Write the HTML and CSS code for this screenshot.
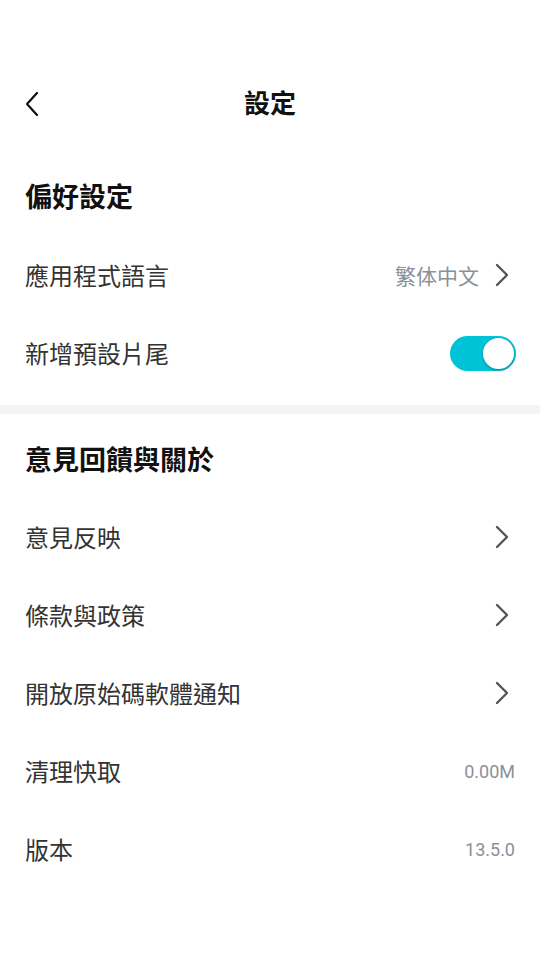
FILE: index.html
```html
<!DOCTYPE html>
<html lang="zh-Hant">
<head>
    <meta charset="UTF-8">
    <meta name="viewport" content="width=device-width, initial-scale=1.0">
    <title>設定</title>
    <link rel="stylesheet" href="styles.css">
</head>
<body>
    <div class="page">
        <div class="topbar">
            <div class="back">
                <svg width="16" height="26" viewBox="0 0 16 26">
                    <path d="M13 2 L3 13 L13 24" fill="none" stroke="#111" stroke-width="2.2" stroke-linecap="round" stroke-linejoin="round"/>
                </svg>
            </div>
            <div class="title">設定</div>
        </div>

        <div class="section-title first">偏好設定</div>
        <div class="row">
            <span class="label">應用程式語言</span>
            <span class="right">
                <span class="value cjk">繁体中文</span>
                <svg class="chev" width="14" height="24" viewBox="0 0 14 24">
                    <path d="M2 2 L12 12 L2 22" fill="none" stroke="#555" stroke-width="2.4" stroke-linecap="round" stroke-linejoin="round"/>
                </svg>
            </span>
        </div>
        <div class="row">
            <span class="label">新增預設片尾</span>
            <span class="toggle on"><span class="knob"></span></span>
        </div>

        <div class="divider"></div>

        <div class="section-title">意見回饋與關於</div>
        <div class="row">
            <span class="label">意見反映</span>
            <svg class="chev" width="14" height="24" viewBox="0 0 14 24">
                <path d="M2 2 L12 12 L2 22" fill="none" stroke="#555" stroke-width="2.4" stroke-linecap="round" stroke-linejoin="round"/>
            </svg>
        </div>
        <div class="row">
            <span class="label">條款與政策</span>
            <svg class="chev" width="14" height="24" viewBox="0 0 14 24">
                <path d="M2 2 L12 12 L2 22" fill="none" stroke="#555" stroke-width="2.4" stroke-linecap="round" stroke-linejoin="round"/>
            </svg>
        </div>
        <div class="row">
            <span class="label">開放原始碼軟體通知</span>
            <svg class="chev" width="14" height="24" viewBox="0 0 14 24">
                <path d="M2 2 L12 12 L2 22" fill="none" stroke="#555" stroke-width="2.4" stroke-linecap="round" stroke-linejoin="round"/>
            </svg>
        </div>
        <div class="row">
            <span class="label">清理快取</span>
            <span class="value num">0.00M</span>
        </div>
        <div class="row">
            <span class="label">版本</span>
            <span class="value num">13.5.0</span>
        </div>
    </div>
</body>
</html>
```

FILE: styles.css
```css
body {
    margin: 0;
    padding: 0;
    background: #fff;
    font-family: "Noto Sans CJK TC", "Noto Sans", sans-serif;
    color: #333;
}

.page {
    width: 540px;
    padding-top: 60px;
}

.topbar {
    height: 84px;
    position: relative;
    display: flex;
    align-items: center;
    justify-content: center;
}

.back {
    position: absolute;
    left: 24px;
    top: 31px;
    width: 16px;
    height: 26px;
}

.back svg {
    display: block;
}

.title {
    font-size: 26px;
    font-weight: bold;
    color: #111;
    line-height: 30px;
}

.section-title {
    font-size: 27px;
    font-weight: bold;
    color: #111;
    line-height: 30px;
    padding: 30px 25px 24px;
}

.section-title.first {
    padding-top: 37px;
    padding-bottom: 25px;
}

.row {
    height: 78px;
    padding: 0 24px 0 25px;
    display: flex;
    align-items: center;
    justify-content: space-between;
}

.label {
    font-size: 24px;
    color: #333;
    line-height: 30px;
}

.right {
    display: flex;
    align-items: center;
}

.value {
    color: #8c9099;
}

.value.cjk {
    font-size: 21px;
    margin-right: 16px;
}

.value.num {
    font-family: Roboto, "Noto Sans", sans-serif;
    font-size: 18px;
    margin-right: 1px;
}

.chev {
    display: block;
    margin-right: 7px;
}

.toggle {
    width: 66px;
    height: 35px;
    border-radius: 18px;
    background: #bfc3c8;
    display: flex;
    align-items: center;
    padding: 0 2px;
    box-sizing: border-box;
}

.toggle.on {
    background: #00c3d7;
    justify-content: flex-end;
}

.knob {
    width: 31px;
    height: 31px;
    border-radius: 50%;
    background: #fff;
    box-shadow: 0 1px 3px rgba(0, 0, 0, 0.3);
}

.divider {
    height: 9px;
    margin-top: 13px;
    background: #f3f4f5;
}
```
